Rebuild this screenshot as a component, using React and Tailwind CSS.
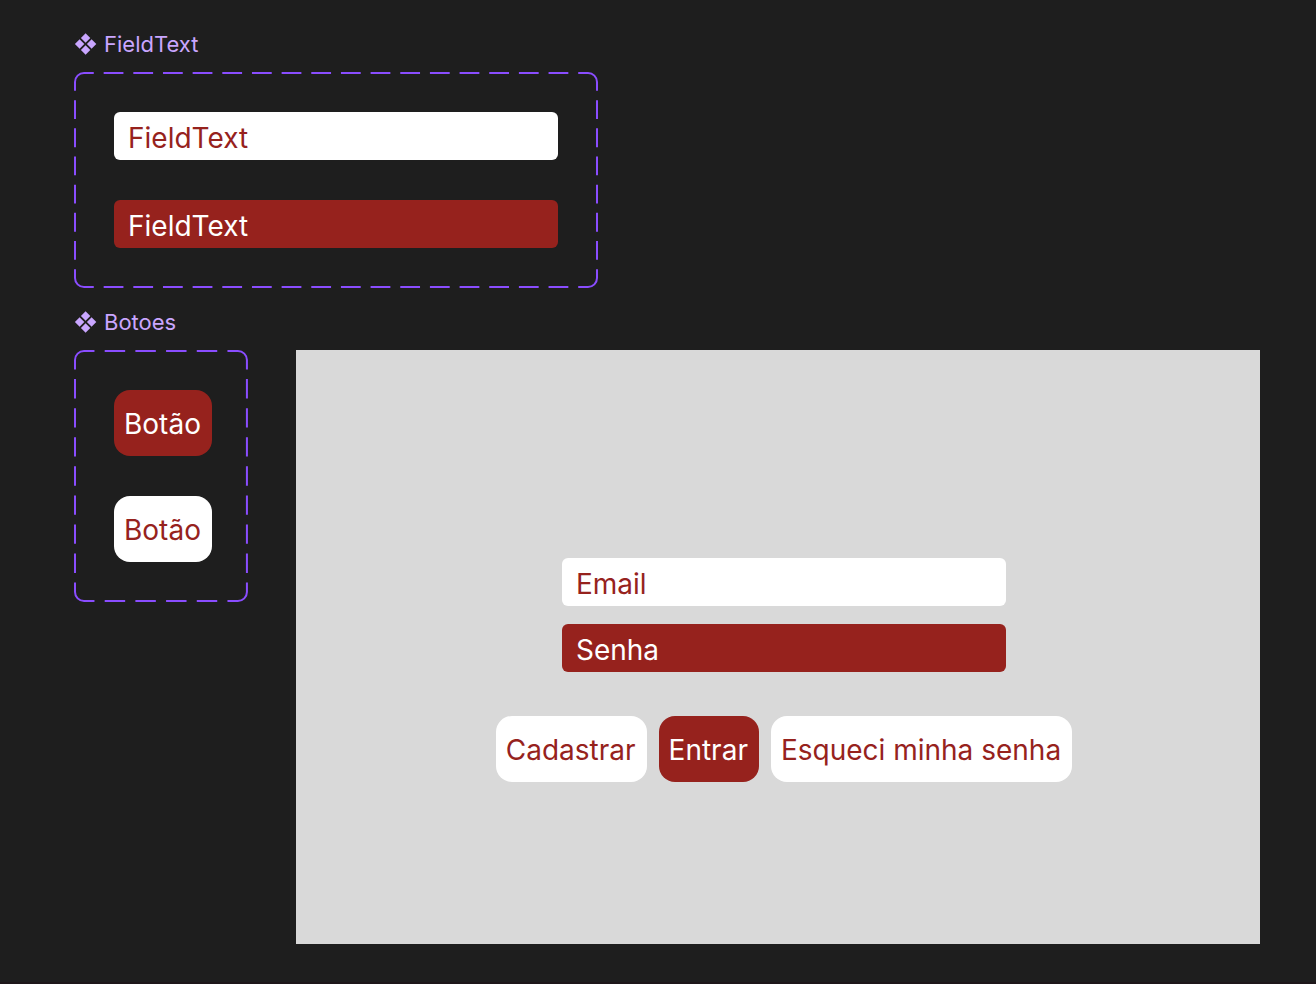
import { useId } from "react";

const tones = {
  light: "bg-white text-[#96221d] placeholder:text-[#96221d]",
  dark: "bg-[#96221d] text-white placeholder:text-white",
};

function ComponentIcon() {
  return (
    <svg viewBox="0 0 23 22" className="h-[22px] w-[23px] shrink-0" fill="currentColor" aria-hidden="true">
      <path d="M11.6 0.3 16.3 5 11.6 9.7 6.9 5Z" />
      <path d="M17.6 6.3 22.3 11 17.6 15.7 12.9 11Z" />
      <path d="M11.6 12.3 16.3 17 11.6 21.7 6.9 17Z" />
      <path d="M5.6 6.3 10.3 11 5.6 15.7 0.9 11Z" />
    </svg>
  );
}

/* Every side starts and ends with a full dash; a gap is half a dash. */
function DashedFrame({ across, down }) {
  const id = useId();
  const side = { stroke: "white", strokeWidth: 20, strokeDasharray: "2 1" };
  return (
    <svg className="pointer-events-none absolute inset-0 size-full" aria-hidden="true">
      <mask id={id} maskUnits="userSpaceOnUse" x="0" y="0" width="100%" height="100%">
        <line x1="0" y1="0" x2="100%" y2="0" pathLength={across * 3 - 1} {...side} />
        <line x1="0" y1="100%" x2="100%" y2="100%" pathLength={across * 3 - 1} {...side} />
        <line x1="0" y1="0" x2="0" y2="100%" pathLength={down * 3 - 1} {...side} />
        <line x1="100%" y1="0" x2="100%" y2="100%" pathLength={down * 3 - 1} {...side} />
      </mask>
      <g mask={`url(#${id})`}>
        <rect
          x="1"
          y="1"
          rx="9"
          className="h-[calc(100%-2px)] w-[calc(100%-2px)] fill-none stroke-[#8a4dff] stroke-2"
        />
      </g>
    </svg>
  );
}

function ComponentSet({ name, across, down, children }) {
  return (
    <section className="flex flex-col items-start gap-3">
      <h2 className="flex h-8 items-center gap-[7px] text-[22px] leading-8 text-[#c9a6ff]">
        <ComponentIcon />
        {name}
      </h2>
      <div className="relative flex flex-col items-start gap-10 py-10 pr-9 pl-10">
        <DashedFrame across={across} down={down} />
        {children}
      </div>
    </section>
  );
}

function Field({ label, tone, type = "text" }) {
  return (
    <input
      type={type}
      aria-label={label}
      placeholder={label}
      className={`h-12 w-[444px] rounded-md px-3.5 pt-1 text-[28px] placeholder:opacity-100 ${tones[tone]}`}
    />
  );
}

function Button({ children, tone }) {
  return (
    <button
      type="button"
      className={`rounded-2xl pt-[17px] pr-[11px] pb-[15px] pl-2.5 text-[28px] leading-[34px] ${tones[tone]}`}
    >
      {children}
    </button>
  );
}

export default function App() {
  return (
    <main className="flex min-h-screen flex-col gap-[18px] border-b-2 border-[#1e171a] bg-[#1e1e1e] pt-7 pr-14 pb-9 pl-[74px] font-['Inter',sans-serif]">
      <ComponentSet name="FieldText" across={18} down={8}>
        <div className="mr-1 flex flex-col gap-10">
          <Field label="FieldText" tone="light" />
          <Field label="FieldText" tone="dark" />
        </div>
      </ComponentSet>
      <div className="flex items-start gap-12">
        <ComponentSet name="Botoes" across={6} down={9}>
          <Button tone="dark">Botão</Button>
          <Button tone="light">Botão</Button>
        </ComponentSet>
        <form className="mt-11 flex flex-1 flex-col items-center bg-[#d9d9d9] pt-52 pb-[162px] pl-3">
          <div className="flex flex-col gap-[18px]">
            <Field label="Email" tone="light" type="email" />
            <Field label="Senha" tone="dark" type="password" />
          </div>
          <div className="mt-11 flex gap-3">
            <Button tone="light">Cadastrar</Button>
            <Button tone="dark">Entrar</Button>
            <Button tone="light">Esqueci minha senha</Button>
          </div>
        </form>
      </div>
    </main>
  );
}
